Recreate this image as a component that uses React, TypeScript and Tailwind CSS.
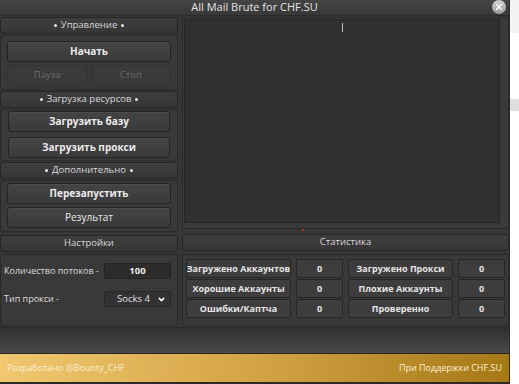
import { ChevronDown, X } from "lucide-react";

const font = { fontFamily: '"Open Sans", "Noto Sans", sans-serif' };

function Header({ label, dots = false }: { label: string; dots?: boolean }) {
  return (
    <div className="h-[17px] shrink-0 flex items-center justify-center rounded-[3px] bg-gradient-to-b from-[#3e3e3e] to-[#363636] border border-[#262626] text-[9.5px] text-[#d8d8d8] whitespace-nowrap">
      {dots && <span className="w-[3px] h-[3px] rounded-full bg-[#e8e8e8] mr-[4px]" />}
      {label}
      {dots && <span className="w-[3px] h-[3px] rounded-full bg-[#e8e8e8] ml-[4px]" />}
    </div>
  );
}

function Btn({ label, dim = false, bold = true }: { label: string; dim?: boolean; bold?: boolean }) {
  return (
    <div
      className={
        "h-[21px] flex-1 flex items-center justify-center rounded-[3px] border whitespace-nowrap " +
        (dim
          ? "bg-[#3a3a3a] border-[#333] text-[#6e6e6e] text-[9.5px]"
          : "bg-gradient-to-b from-[#444] to-[#3a3a3a] border-[#242424] text-[#ececec] shadow-[inset_0_1px_0_#4c4c4c] text-[10px]") +
        (bold ? " font-bold" : "")
      }
    >
      {label}
    </div>
  );
}

function Panel({ children, className = "" }: { children: React.ReactNode; className?: string }) {
  return (
    <div className={"rounded-[3px] border border-[#2a2a2a] bg-[#393939] flex flex-col " + className}>
      {children}
    </div>
  );
}

function StatCell({ label, value }: { label: string; value: string }) {
  return (
    <>
      <div className="h-[19px] flex items-center justify-center rounded-[2px] border border-[#262626] bg-[#3d3d3d] text-[9px] font-bold text-[#e6e6e6] whitespace-nowrap">
        {label}
      </div>
      <div className="h-[19px] flex items-center justify-center rounded-[2px] border border-[#262626] bg-[#3d3d3d] text-[9px] font-bold text-[#e6e6e6]">
        {value}
      </div>
    </>
  );
}

export default function App() {
  return (
    <div className="w-[519px] h-[384px] flex overflow-hidden bg-white" style={font}>
      <div className="w-[510px] h-full flex flex-col bg-[#363636] border-r border-[#2a2a2a]">
        {/* title */}
        <div className="h-[16px] shrink-0 relative flex items-center justify-center bg-gradient-to-b from-[#454545] to-[#383838] text-[11px] text-[#e4e4e4] border-b border-[#2b2b2b]">
          All Mail Brute for CHF.SU
          <div className="absolute right-[3px] top-[0px] w-[14px] h-[14px] rounded-full bg-gradient-to-b from-[#d4d4d4] to-[#9a9a9a] flex items-center justify-center">
            <X className="w-[10px] h-[10px] text-white" strokeWidth={3} />
          </div>
        </div>

        <div className="flex-1 flex gap-[4px] pt-px">
          {/* left */}
          <div className="w-[179px] flex flex-col gap-px">
            <Header label="Управление" dots />
            <Panel className="h-[55px] px-[6px] py-[5px] gap-[3px]">
              <div className="flex"><Btn label="Начать" /></div>
              <div className="flex gap-[3px]">
                <Btn label="Пауза" dim bold={false} />
                <Btn label="Стоп" dim bold={false} />
              </div>
            </Panel>
            <Header label="Загрузка ресурсов" dots />
            <Panel className="h-[52px] px-[7px] pt-px gap-[5px]">
              <div className="flex"><Btn label="Загрузить базу" /></div>
              <div className="flex"><Btn label="Загрузить прокси" /></div>
            </Panel>
            <Header label="Дополнительно" dots />
            <Panel className="h-[52px] px-[6px] pt-[2px] gap-[3px]">
              <div className="flex"><Btn label="Перезапустить" /></div>
              <div className="flex"><Btn label="Результат" bold={false} /></div>
            </Panel>
            <div className="mt-[2px]"><Header label="Настройки" /></div>
            <Panel className="flex-1 mt-px pl-[3px] pr-[6px] pt-[8px] gap-[12px]">
              <div className="flex items-center justify-between">
                <span className="text-[9px] text-[#dcdcdc] whitespace-nowrap">Количество потоков -</span>
                <div className="w-[67px] h-[16px] rounded-[2px] bg-[#2c2c2c] border border-[#242424] flex items-center justify-center text-[9.5px] font-bold text-[#ececec]">
                  100
                </div>
              </div>
              <div className="flex items-center justify-between">
                <span className="text-[9px] text-[#dcdcdc] whitespace-nowrap">Тип прокси -</span>
                <div className="w-[67px] h-[16px] rounded-[2px] bg-[#323232] border border-[#262626] flex items-center pl-[12px] pr-[4px] text-[9.5px] text-[#e0e0e0]">
                  <span className="flex-1">Socks 4</span>
                  <ChevronDown className="w-[9px] h-[9px] text-white" strokeWidth={4} />
                </div>
              </div>
            </Panel>
          </div>

          {/* right */}
          <div className="flex-1 flex flex-col">
            <div className="h-[212px] flex rounded-[2px] border border-[#2a2a2a] bg-[#3a3a3a]">
              <div className="flex-1 mt-px mb-[5px] ml-px bg-[#303030] border border-[#262626] relative">
                <span className="absolute left-[157px] top-[3px] w-px h-[9px] bg-[#bbb]" />
              </div>
              <div className="w-[8px]" />
            </div>
            <div className="h-[5px] relative">
              <span className="absolute left-[120px] top-[0px] w-[2px] h-[2px] bg-[#e02020]" />
            </div>
            <Header label="Статистика" />
            <Panel className="flex-1 mt-[3px] px-[3px] pt-[4px]">
              <div className="grid grid-cols-[105px_47px_105px_47px] gap-x-[5px] gap-y-px">
                <StatCell label="Загружено Аккаунтов" value="0" />
                <StatCell label="Загружено Прокси" value="0" />
                <StatCell label="Хорошие Аккаунты" value="0" />
                <StatCell label="Плохие Аккаунты" value="0" />
                <StatCell label="Ошибки/Каптча" value="0" />
                <StatCell label="Проверенно" value="0" />
              </div>
            </Panel>
          </div>
        </div>

        {/* bottom band */}
        <div className="h-[27px] shrink-0 mt-[1px] bg-gradient-to-b from-[#303030] to-[#4a4a4a] border-t border-[#2a2a2a] border-b border-b-[#262626]" />
        {/* footer */}
        <div className="h-[28px] shrink-0 flex items-center justify-between px-[7px] bg-gradient-to-r from-[#f1c76f] via-[#d3a443] to-[#a57912] text-[9px] text-[#fbf0d6]">
          <span>Разработано @Bounty_CHF</span>
          <span>При Поддержки CHF.SU</span>
        </div>
        <div className="h-[2px] shrink-0 bg-[#2a2a2a]" />
      </div>
      <div className="flex-1 flex flex-col bg-white">
        <div className="h-[33px] bg-[#f4f4f4]" />
        <div className="h-[66px]" />
        <div className="h-[12px] bg-[#dedede]" />
      </div>
    </div>
  );
}
